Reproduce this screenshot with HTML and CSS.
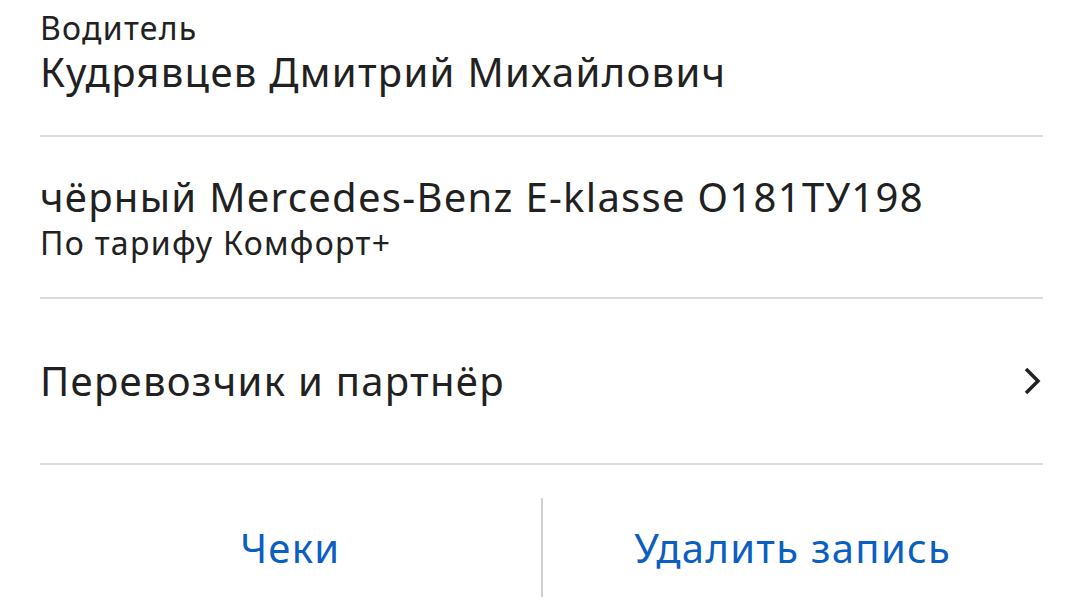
FILE: index.html
```html
<!DOCTYPE html>
<html lang="ru">
<head>
<meta charset="utf-8">
<link rel="stylesheet" href="styles.css">
</head>
<body>
<div class="screen">
  <div class="block driver">
    <div class="label">Водитель</div>
    <div class="title">Кудрявцев Дмитрий Михайлович</div>
  </div>
  <div class="block car">
    <div class="title">чёрный Mercedes-Benz E-klasse О181ТУ198</div>
    <div class="label">По тарифу Комфорт+</div>
  </div>
  <div class="block row">
    <div class="title">Перевозчик и партнёр</div>
    <svg class="chevron" width="20" height="30" viewBox="0 0 20 30"><path d="M4 3 L16 15 L4 27" fill="none" stroke="#212121" stroke-width="3.5"/></svg>
  </div>
  <div class="actions">
    <div class="action">Чеки</div>
    <div class="divider"></div>
    <div class="action">Удалить запись</div>
  </div>
</div>
</body>
</html>
```
FILE: styles.css
```css
html, body {
  margin: 0;
  padding: 0;
  background: #ffffff;
}
.screen {
  width: 1080px;
  height: 605px;
  overflow: hidden;
  font-family: "Noto Sans", "Open Sans", sans-serif;
  color: #212121;
}
.block {
  margin: 0 37px 0 40px;
  border-bottom: 2px solid #dcdcdc;
  box-sizing: border-box;
}
.driver {
  height: 137px;
  padding-top: 8px;
}
.car {
  height: 162px;
  padding-top: 36px;
}
.car .label {
  margin-top: 2px;
}
.label {
  font-size: 32px;
  line-height: 40px;
  letter-spacing: 1.3px;
}
.title {
  font-size: 40px;
  line-height: 48px;
  letter-spacing: 1.3px;
}
.row {
  height: 166px;
  display: flex;
  align-items: center;
  justify-content: space-between;
}
.chevron {
  margin-right: 1px;
}
.actions {
  display: flex;
  align-items: center;
  height: 140px;
  margin: 0 37px 0 40px;
  padding-top: 24px;
  box-sizing: border-box;
}
.action {
  flex: 1;
  text-align: center;
  font-size: 40px;
  letter-spacing: 1.3px;
  color: #0b5fc1;
}
.divider {
  width: 2px;
  height: 99px;
  background: #d0d0d0;
}
```
